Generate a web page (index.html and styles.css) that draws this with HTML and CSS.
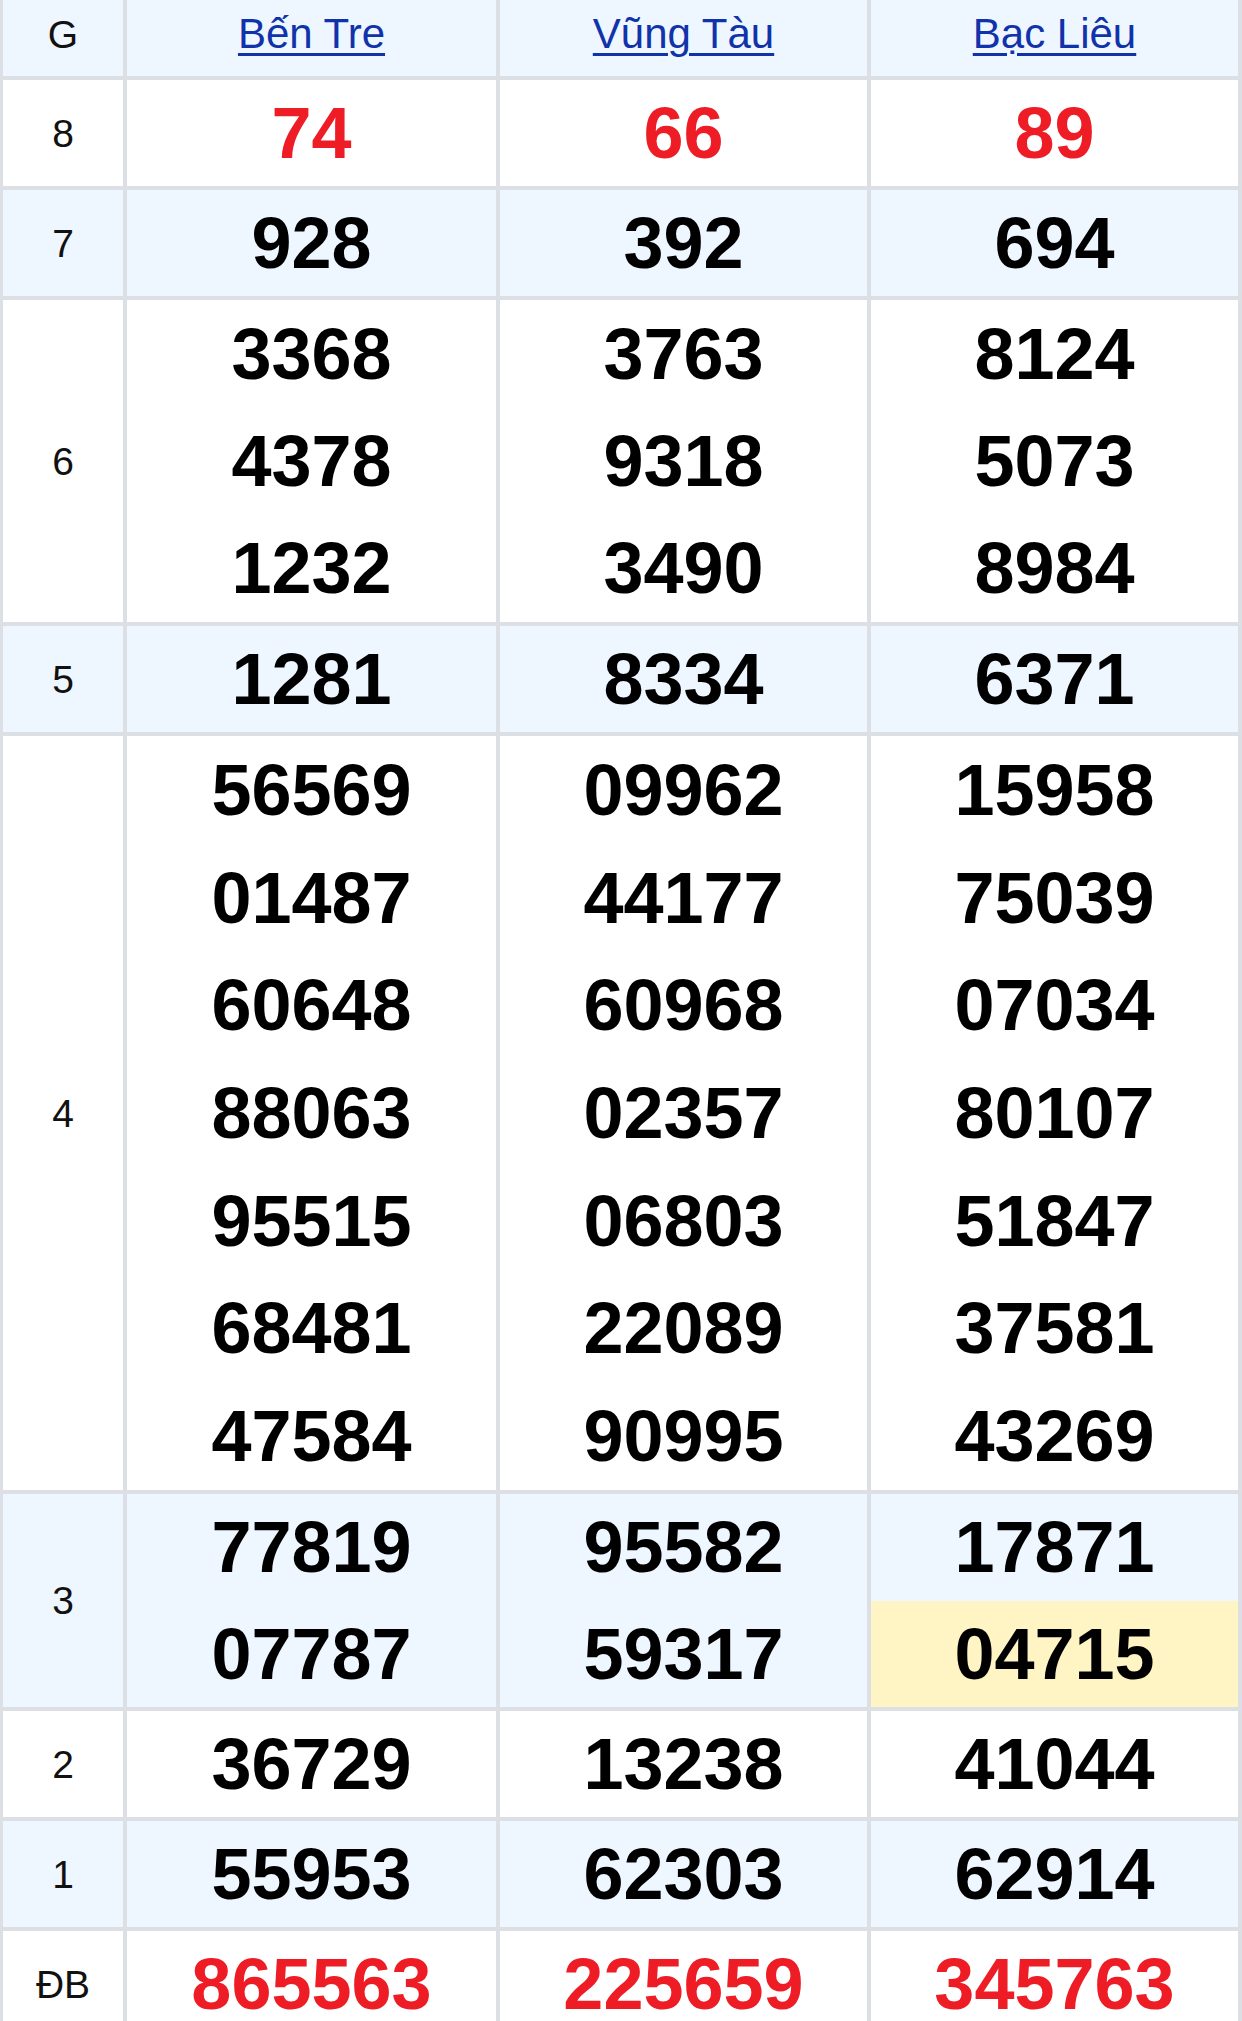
FILE: index.html
```html
<!DOCTYPE html>
<html lang="vi">
<head>
<meta charset="utf-8">
<title>Kết quả xổ số</title>
<link rel="stylesheet" href="styles.css">
</head>
<body>
<div class="board">
  <div class="cell label head">G</div>
  <div class="cell head"><a href="#" class="prov">Bến Tre</a></div>
  <div class="cell head"><a href="#" class="prov">Vũng Tàu</a></div>
  <div class="cell head"><a href="#" class="prov">Bạc Liêu</a></div>

  <div class="cell label">8</div>
  <div class="cell num red">74</div>
  <div class="cell num red">66</div>
  <div class="cell num red">89</div>

  <div class="cell label alt">7</div>
  <div class="cell num alt">928</div>
  <div class="cell num alt">392</div>
  <div class="cell num alt">694</div>

  <div class="cell label">6</div>
  <div class="cell multi"><div class="line">3368</div><div class="line">4378</div><div class="line">1232</div></div>
  <div class="cell multi"><div class="line">3763</div><div class="line">9318</div><div class="line">3490</div></div>
  <div class="cell multi"><div class="line">8124</div><div class="line">5073</div><div class="line">8984</div></div>

  <div class="cell label alt">5</div>
  <div class="cell num alt">1281</div>
  <div class="cell num alt">8334</div>
  <div class="cell num alt">6371</div>

  <div class="cell label">4</div>
  <div class="cell multi"><div class="line">56569</div><div class="line">01487</div><div class="line">60648</div><div class="line">88063</div><div class="line">95515</div><div class="line">68481</div><div class="line">47584</div></div>
  <div class="cell multi"><div class="line">09962</div><div class="line">44177</div><div class="line">60968</div><div class="line">02357</div><div class="line">06803</div><div class="line">22089</div><div class="line">90995</div></div>
  <div class="cell multi"><div class="line">15958</div><div class="line">75039</div><div class="line">07034</div><div class="line">80107</div><div class="line">51847</div><div class="line">37581</div><div class="line">43269</div></div>

  <div class="cell label alt">3</div>
  <div class="cell multi alt"><div class="line">77819</div><div class="line">07787</div></div>
  <div class="cell multi alt"><div class="line">95582</div><div class="line">59317</div></div>
  <div class="cell multi alt"><div class="line">17871</div><div class="line hl">04715</div></div>

  <div class="cell label">2</div>
  <div class="cell num">36729</div>
  <div class="cell num">13238</div>
  <div class="cell num">41044</div>

  <div class="cell label alt">1</div>
  <div class="cell num alt">55953</div>
  <div class="cell num alt">62303</div>
  <div class="cell num alt">62914</div>

  <div class="cell label">ĐB</div>
  <div class="cell num red">865563</div>
  <div class="cell num red">225659</div>
  <div class="cell num red">345763</div>
</div>
</body>
</html>
```

FILE: styles.css
```css
html, body {
  margin: 0;
  padding: 0;
  background: #ffffff;
}

body {
  font-family: "Liberation Sans", Arial, sans-serif;
  color: #000000;
}

.board {
  display: grid;
  grid-template-columns: 120px 369px 367px 367px;
  grid-template-rows: 76px 106px 106px 322px 106px 754px 213px 106px 106px 106px;
  gap: 4px;
  padding: 0 4px 0 3px;
  background: #dcdfe4;
  width: 1242px;
  box-sizing: border-box;
}

.cell {
  background: #ffffff;
  display: flex;
  align-items: center;
  justify-content: center;
  text-align: center;
}

.head,
.alt {
  background: #eef6ff;
}

.head {
  padding-bottom: 8px;
}

.label {
  font-size: 39px;
  font-weight: 400;
  line-height: 1;
  color: #111111;
}

.prov {
  font-size: 42px;
  line-height: 1;
  color: #1033aa;
  text-decoration: underline;
  text-underline-offset: 5px;
  text-decoration-thickness: 3px;
}

.num,
.line {
  font-size: 72px;
  font-weight: 700;
  line-height: 1;
}

.red {
  color: #ee1c25;
}

.multi {
  flex-direction: column;
  align-items: stretch;
  justify-content: stretch;
}

.line {
  flex: 1;
  display: flex;
  align-items: center;
  justify-content: center;
}

.hl {
  background: #fff4c4;
}
```
